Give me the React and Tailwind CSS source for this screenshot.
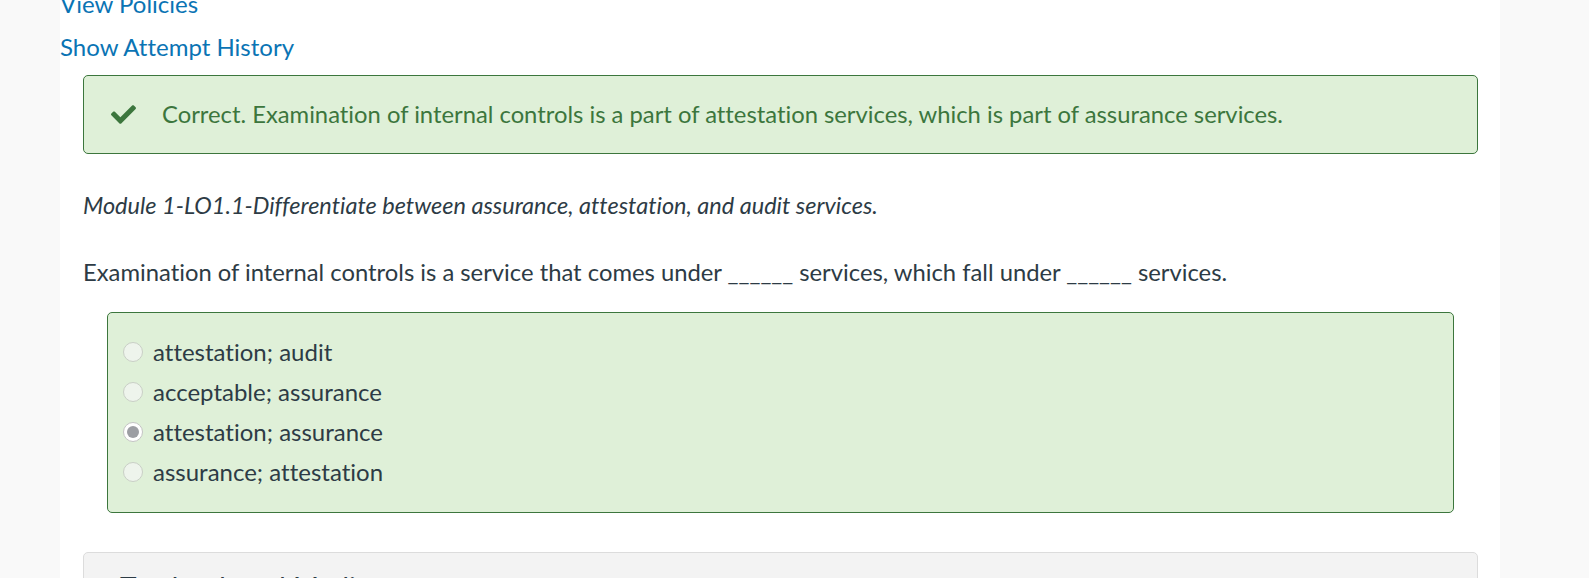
import { FaCheck } from 'react-icons/fa';

const choices = [
  { label: 'attestation; audit', selected: false },
  { label: 'acceptable; assurance', selected: false },
  { label: 'attestation; assurance', selected: true },
  { label: 'assurance; attestation', selected: false },
];

function Radio({ selected }) {
  if (selected) {
    return (
      <span className="flex h-[20px] w-[20px] items-center justify-center rounded-full border border-[#c4c4c4] bg-white">
        <span className="h-[12px] w-[12px] rounded-full bg-[#9c9ea3]"></span>
      </span>
    );
  }
  return <span className="h-[20px] w-[20px] rounded-full border border-[#c9cfc6] bg-[#eef4ec]"></span>;
}

export default function App() {
  return (
    <div className="flex h-[578px] w-full overflow-hidden bg-[#f9f9f9] font-['Lato','Open_Sans',sans-serif] text-[#2d3b45] [font-variant-ligatures:none]">
      <div className="ml-[60px] w-[1440px] bg-white">
        <div className="mt-[-10px] h-[28px] text-[24px] leading-[28px] text-[#0a74b4]">View Policies</div>
        <div className="mt-[15px] h-[28px] text-[24px] leading-[28px] text-[#0a74b4]">Show Attempt History</div>

        <div className="ml-[23px] mr-[22px] mt-[14px] flex h-[79px] items-center rounded-[5px] border border-[#3c763d] bg-[#dff0d8] text-[#3c763d]">
          <FaCheck className="ml-[25px] h-[25px] w-[29px]" />
          <span className="ml-[24px] text-[23.8px]">
            Correct. Examination of internal controls is a part of attestation services, which is part of assurance services.
          </span>
        </div>

        <div className="ml-[23px] mt-[35px] text-[23.5px] italic leading-[32px]">
          Module 1-LO1.1-Differentiate between assurance, attestation, and audit services.
        </div>
        <div className="ml-[23px] mt-[35px] text-[23.8px] leading-[32px]">
          Examination of internal controls is a service that comes under ______ services, which fall under ______ services.
        </div>

        <div className="ml-[47px] mr-[46px] mt-[24px] rounded-[5px] border border-[#3c763d] bg-[#dff0d8] pb-[20px] pt-[19px]">
          {choices.map((c) => (
            <div key={c.label} className="flex h-[40px] items-center pl-[15px]">
              <Radio selected={c.selected} />
              <span className="ml-[10px] text-[24px]">{c.label}</span>
            </div>
          ))}
        </div>

        <div className="ml-[23px] mr-[22px] mt-[39px] rounded-t-[5px] border border-[#dcdcdc] bg-[#f3f3f3] pl-[36px] pt-[16px]">
          <div className="text-[28px] leading-[36px]">Textbook and Media</div>
        </div>
      </div>
    </div>
  );
}
